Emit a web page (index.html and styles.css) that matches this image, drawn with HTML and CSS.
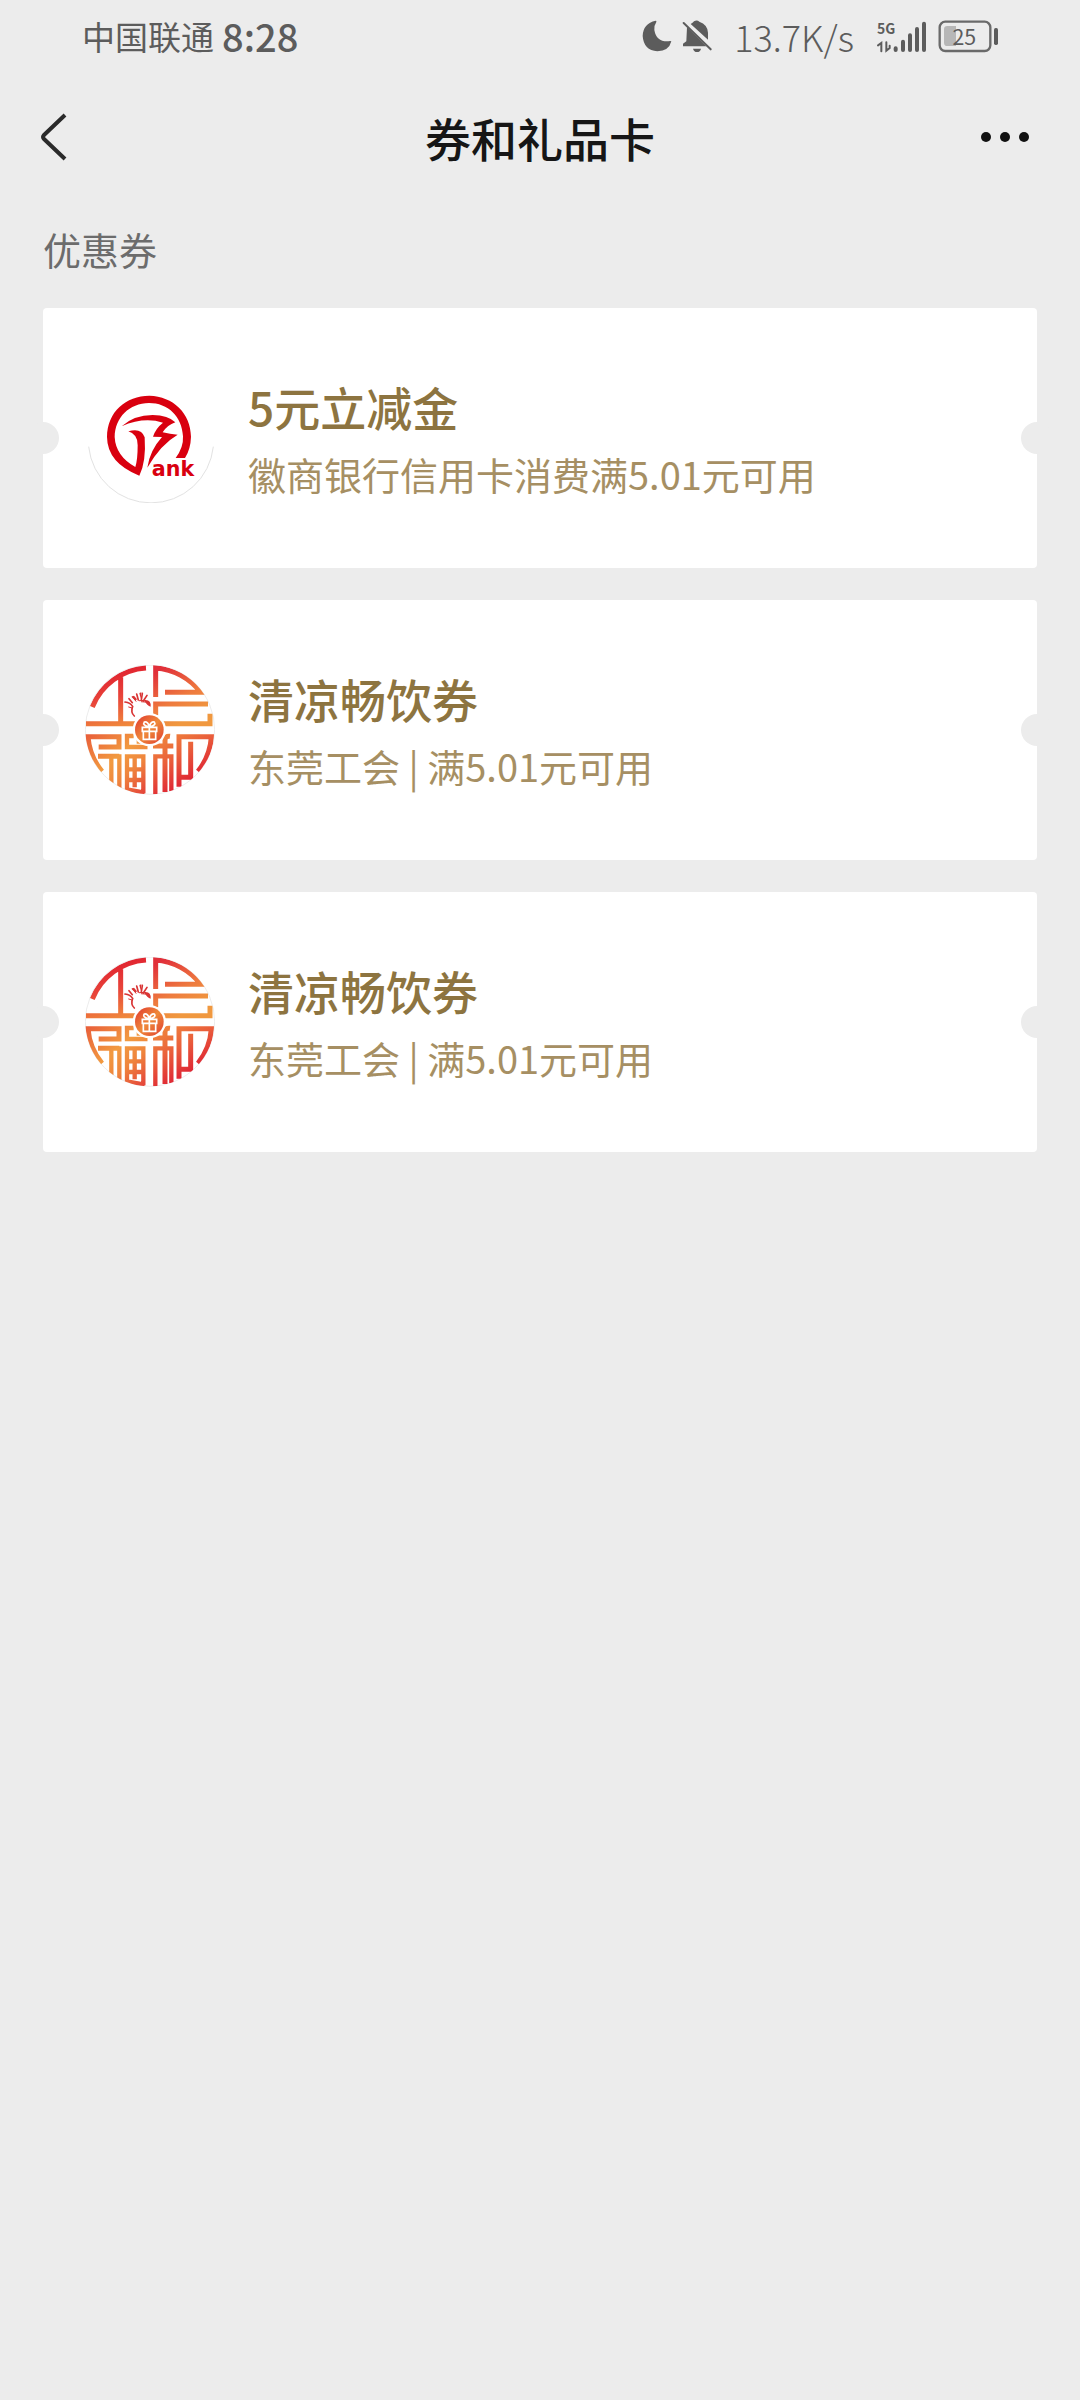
FILE: index.html
```html
<!DOCTYPE html>
<html lang="zh-CN">
<head>
<meta charset="utf-8">
<meta name="viewport" content="width=device-width, initial-scale=1">
<title>券和礼品卡</title>
<link rel="stylesheet" href="styles.css">
</head>
<body>
<svg class="defs" width="0" height="0" aria-hidden="true">
  <defs>
    <linearGradient id="g-ul" gradientUnits="userSpaceOnUse" x1="100" y1="60" x2="140" y2="235"><stop offset="0" stop-color="#e0202f"/><stop offset=".5" stop-color="#e8453a"/><stop offset="1" stop-color="#f08a3c"/></linearGradient>
    <linearGradient id="g-ur" gradientUnits="userSpaceOnUse" x1="270" y1="60" x2="350" y2="210"><stop offset="0" stop-color="#e1303a"/><stop offset=".6" stop-color="#ee7a3e"/><stop offset="1" stop-color="#f0983f"/></linearGradient>
    <linearGradient id="g-ll" gradientUnits="userSpaceOnUse" x1="60" y1="250" x2="215" y2="430"><stop offset="0" stop-color="#e9603a"/><stop offset=".45" stop-color="#f29a40"/><stop offset=".7" stop-color="#ef843d"/><stop offset="1" stop-color="#e5483a"/></linearGradient>
    <linearGradient id="g-lr" gradientUnits="userSpaceOnUse" x1="260" y1="255" x2="350" y2="400"><stop offset="0" stop-color="#f08a3c"/><stop offset=".5" stop-color="#ea603b"/><stop offset="1" stop-color="#df2534"/></linearGradient>
    <linearGradient id="g-c" x1="0" y1="0" x2="1" y2="1"><stop offset="0" stop-color="#e0352f"/><stop offset=".5" stop-color="#ef8a3a"/><stop offset="1" stop-color="#df3a30"/></linearGradient>
    <clipPath id="disc"><circle cx="240" cy="239" r="194"/></clipPath>
    <symbol id="union-logo" viewBox="45 45 390 390">
      <circle cx="240" cy="239" r="194" fill="none" stroke="#e2e2e2" stroke-width="2"/>
      <g clip-path="url(#disc)" fill="none" stroke-width="15">
        <path stroke="url(#g-ul)" d="M67 171A186 186 0 0 1 228 54M152 82V221M48 221H198"/>
        <path stroke="url(#g-ur)" d="M257 141V54A186 186 0 0 1 392 127H285M257 196V162H414M274 221H420V191"/>
        <path stroke="url(#g-ll)" d="M96 364A186 186 0 0 1 54 260H147V291H86M84 319H148"/>
        <path stroke="url(#g-ll)" stroke-width="13" d="M124 319V400M148 313V414M191 258H171V291H226V275H200M171 424V319H220V430M194 319V412M171 358H220M171 390H220M171 418L224 428"/>
        <path stroke="url(#g-lr)" d="M249 288H310M300 259Q285 257 285 272V426M384 364A186 186 0 0 0 424 260H327V410M362 275V382H327"/>
        <path stroke="url(#g-lr)" stroke-width="13" d="M256 434V319H304V424"/>
      </g>
      <g fill="none" stroke="#d93434" stroke-width="5" stroke-linecap="round">
        <path d="M165 156Q181 158 188 169Q181 187 193 198M177 146L187 158M200 132L205 150M217 130L214 150M231 136L220 153"/>
        <path stroke-width="3" d="M188 140L198 154M176 171L186 174M208 152Q226 148 239 162Q230 154 214 155"/>
      </g>
      <path fill="#d93434" d="M222 150Q244 147 242 170Q232 168 222 150M184 140L196 152L201 148L192 137zM208 129L214 127L212 147z"/>
      <circle cx="238" cy="239" r="50" fill="#fff"/>
      <circle cx="238" cy="239" r="43" fill="url(#g-c)"/>
      <g fill="none" stroke="#fff" stroke-width="5">
        <path d="M217 232H260V244H217zM220 246V268H257V246M238 231V268M238 230Q216 226 223 216Q233 214 238 229Q243 214 253 216Q260 226 238 230"/>
      </g>
    </symbol>
  </defs>
</svg>

<header class="top">
  <div class="status">
    <div class="status-left"><span class="carrier">中国联通</span><span class="clock">8:28</span></div>
    <div class="status-right">
      <svg class="moon" viewBox="69 60 90 96" aria-hidden="true"><path fill="#5c5c5c" d="M110 62Q72 70 71 108Q74 151 115 154Q150 153 157 124Q154 122 148 124Q112 126 106 90Q105 76 112 66Q113 62 110 62z"/></svg>
      <svg class="bell" viewBox="189 60 90 96" aria-hidden="true"><path fill="#5c5c5c" d="M204 82L262 139H192V131L202 124zM215 72Q223 68 225 64Q234 59 241 65Q266 74 267 98V119zM222 146H246Q244 156 234 156Q225 156 222 146z"/><path stroke="#5c5c5c" stroke-width="6" stroke-linecap="round" d="M194 69L275 148"/></svg>
      <span class="speed">13.7K/s</span>
      <svg class="signal" viewBox="768 45 153 123" aria-hidden="true"><text x="771" y="100" class="net">5G</text><g fill="none" stroke="#5c5c5c" stroke-linecap="round"><path stroke-width="6" d="M784 151V126L774 133M799 124V149L809 141V134"/><path stroke-width="12" d="M827 142V147M849 122V147M870 103V147M891 84V147M912 68V147"/></g></svg>
      <svg class="battery" viewBox="954 57 183 102" aria-hidden="true"><rect x="959" y="65" width="152" height="88" rx="17" fill="none" stroke="#6a6a6a" stroke-width="7"/><path fill="#b7b7b7" d="M982 78H1008V138H982Q972 138 972 128V88Q972 78 982 78z"/><rect x="1122" y="84" width="12" height="51" rx="5" fill="#5c5c5c"/><text x="1033" y="135" text-anchor="middle" class="level">25</text></svg>
    </div>
  </div>
  <nav class="nav">
    <button class="icon-btn" type="button" aria-label="返回"><svg class="back" viewBox="0 0 28 50" aria-hidden="true"><path fill="none" stroke="#2a2a2a" stroke-width="4" d="M25 3L4 23Q2 25 4 27L25 47"/></svg></button>
    <h1 class="title">券和礼品卡</h1>
    <button class="icon-btn more-btn" type="button" aria-label="更多"><svg class="more" viewBox="0 0 50 12" aria-hidden="true"><g fill="#111"><circle cx="6" cy="6" r="5"/><circle cx="25" cy="6" r="5"/><circle cx="44" cy="6" r="5"/></g></svg></button>
  </nav>
</header>

<main class="content">
  <h2 class="section">优惠券</h2>
  <ul class="coupons">
    <li class="coupon">
      <svg class="logo" viewBox="45 9 390 390" aria-hidden="true">
        <path fill="none" stroke="#e2e2e2" stroke-width="3" d="M56 230A188 188 0 0 0 430 230"/>
        <g fill="#d9000f">
          <path d="M208 317Q112 279 111 201C112 125 168 77 238 77C310 79 362 130 363 200Q362 237 345 264H317Q341 232 339 199C336 139 294 99 237 99C178 100 135 142 134 201Q137 258 196 291Q203 270 203 226Q204 193 175 184Q214 172 224 202Q229 276 208 317z"/>
          <path d="M155 169Q192 135 248 135Q295 136 316 157Q292 165 278 187Q300 193 323 194Q272 223 232 293Q239 242 276 201L249 200Q257 175 279 158Q221 140 155 169z"/>
        </g>
        <text x="309" y="318" text-anchor="middle" class="ank">ank</text>
      </svg>
      <div class="info"><h3 class="name">5元立减金</h3><p class="desc">徽商银行信用卡消费满5.01元可用</p></div>
    </li>
    <li class="coupon">
      <svg class="logo" aria-hidden="true"><use href="#union-logo"/></svg>
      <div class="info"><h3 class="name">清凉畅饮券</h3><p class="desc">东莞工会 | 满5.01元可用</p></div>
    </li>
    <li class="coupon">
      <svg class="logo" aria-hidden="true"><use href="#union-logo"/></svg>
      <div class="info"><h3 class="name">清凉畅饮券</h3><p class="desc">东莞工会 | 满5.01元可用</p></div>
    </li>
  </ul>
</main>
</body>
</html>
```
FILE: styles.css
```css
* { box-sizing: border-box; margin: 0; padding: 0; }
body {
  min-height: 100vh;
  background: #ececec;
  font-family: "Noto Sans CJK SC", "Noto Sans", sans-serif;
  color: #161616;
}
.defs { position: absolute; }
svg { display: block; flex: none; }

.status {
  display: flex;
  justify-content: space-between;
  align-items: center;
  height: 72px;
  padding: 0 81px 0 82px;
  color: #5c5c5c;
}
.status-left, .status-right { display: flex; align-items: center; }
.status-left { gap: 8px; }
.carrier { font-size: 33px; line-height: 48px; }
.clock { font-size: 38px; line-height: 48px; font-weight: 500; }
.moon, .bell { width: 30px; height: 32px; }
.bell { margin-left: 10px; }
.speed { margin: 0 22px; font-size: 36px; line-height: 48px; font-weight: 300; }
.signal { width: 51px; height: 41px; }
.battery { width: 61px; height: 34px; margin-left: 11px; }
.net { font: 700 42px "Noto Sans CJK SC", sans-serif; fill: #5c5c5c; }
.level { font: 400 64px "Noto Sans CJK SC", sans-serif; fill: #5c5c5c; }

.nav {
  display: flex;
  justify-content: space-between;
  align-items: center;
  height: 130px;
  padding: 0 40px;
}
.icon-btn { border: 0; background: none; display: flex; align-items: center; width: 60px; height: 64px; }
.more-btn { padding-right: 10px; }
.back { width: 28px; height: 50px; }
.more { width: 50px; height: 12px; }
.title { font-size: 46px; line-height: 64px; font-weight: 500; }

.content { padding: 0 43px; }
.section { padding: 22px 0 34px; font-size: 38px; line-height: 50px; font-weight: 400; color: #6c6c6c; }
.coupons { list-style: none; display: flex; flex-direction: column; gap: 32px; }
.coupon {
  position: relative;
  display: flex;
  align-items: center;
  gap: 33px;
  min-height: 260px;
  padding: 0 42px;
  background: #fff;
  border-radius: 4px;
}
.coupon::before, .coupon::after {
  content: "";
  position: absolute;
  top: 50%;
  width: 32px;
  height: 32px;
  margin-top: -16px;
  border-radius: 50%;
  background: #ececec;
}
.coupon::before { left: -16px; }
.coupon::after { right: -16px; }
.logo { width: 130px; height: 130px; }
.ank { font: 700 62px "DejaVu Sans", sans-serif; fill: #d9000f; }
.info { display: flex; flex-direction: column; gap: 10px; padding-bottom: 4px; }
.name { font-size: 46px; line-height: 66px; font-weight: 500; color: #8d7440; }
.desc { font-size: 38px; line-height: 50px; color: #a68f63; }
```
